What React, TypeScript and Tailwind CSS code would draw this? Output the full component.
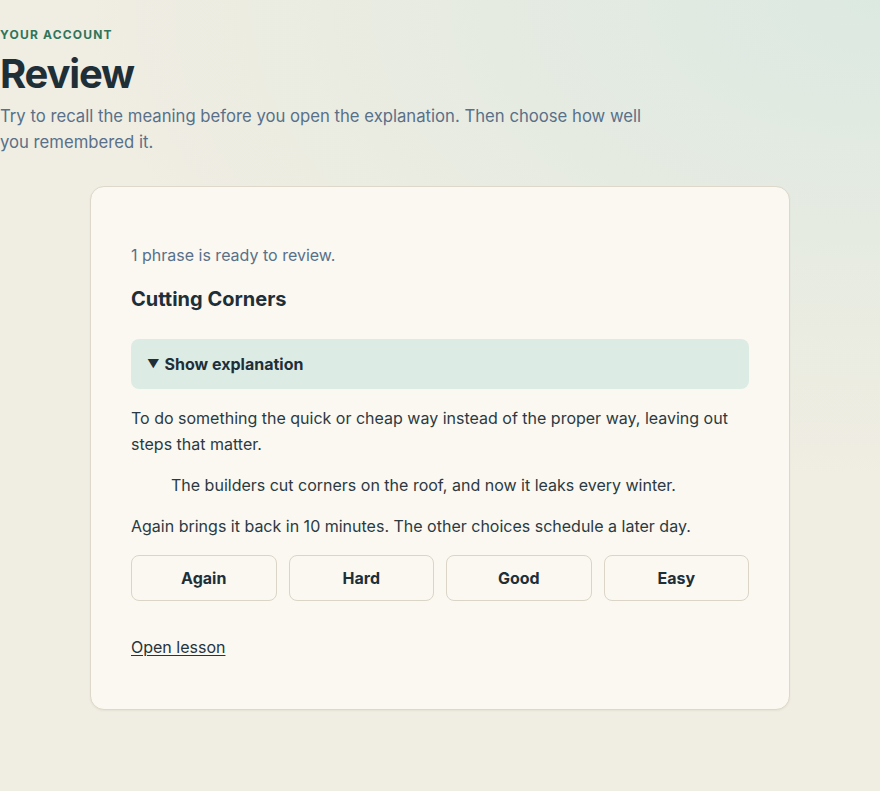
import { useState } from 'react'

const ratings = ['Again', 'Hard', 'Good', 'Easy']

export default function App() {
  const [open, setOpen] = useState(false)

  return (
    <div
      className="min-h-screen bg-[#f0ede2] bg-[radial-gradient(ellipse_90%_60%_at_100%_0%,#dce9e1_0%,rgba(220,233,225,0)_100%)] text-[#26343c] pt-[27px] pb-20"
      style={{ fontFamily: 'Inter, "Noto Sans", sans-serif' }}
    >
      <header className="mb-[31px]">
        <p className="text-[12px] leading-4 font-bold uppercase tracking-[0.1em] text-[#2f7559]">
          Your account
        </p>
        <h1 className="mt-[9px] text-[40px] leading-[44px] font-bold tracking-[-0.03em] text-[#1f2f38]">
          Review
        </h1>
        <p className="mt-[7px] max-w-[660px] text-[16.7px] leading-[26px] text-[#587089]">
          Try to recall the meaning before you open the explanation. Then choose how well you remembered it.
        </p>
      </header>

      <section className="mx-auto w-[700px] rounded-[14px] border border-[#ddd8c9] bg-[#faf8f1] px-10 pt-[56px] pb-[50px] shadow-[0_1px_2px_rgba(60,50,20,0.06)]">
        <p className="text-[16px] leading-6 text-[#587089]">1 phrase is ready to review.</p>
        <h2 className="mt-[18px] text-[20px] leading-7 font-bold text-[#1f2f38]">Cutting Corners</h2>

        <button
          onClick={() => setOpen(!open)}
          className="mt-[26px] flex h-[50px] w-full items-center gap-[5px] rounded-lg bg-[#dcece5] px-4 text-left text-[16px] font-bold text-[#1f2f38]"
        >
          <span className="text-[12px]">▼</span>
          Show explanation
        </button>

        <p className="mt-4 text-[16px] leading-[26px] text-[#2b3a42]">
          To do something the quick or cheap way instead of the proper way, leaving out steps that matter.
        </p>
        <blockquote className="mt-[15px] pl-10 text-[16px] leading-[26px] text-[#2b3a42]">
          The builders cut corners on the roof, and now it leaks every winter.
        </blockquote>
        <p className="mt-[15px] text-[16px] leading-[26px] text-[#2b3a42]">
          Again brings it back in 10 minutes. The other choices schedule a later day.
        </p>

        <div className="mt-4 grid grid-cols-4 gap-3">
          {ratings.map((label) => (
            <button
              key={label}
              className="h-[46px] rounded-lg border border-[#dad5c7] bg-[#faf8f1] text-[16px] font-bold text-[#1f2f38]"
            >
              {label}
            </button>
          ))}
        </div>

        <a href="#" className="mt-[34px] inline-block text-[16px] leading-6 text-[#26343c] underline underline-offset-2">
          Open lesson
        </a>
      </section>
    </div>
  )
}
